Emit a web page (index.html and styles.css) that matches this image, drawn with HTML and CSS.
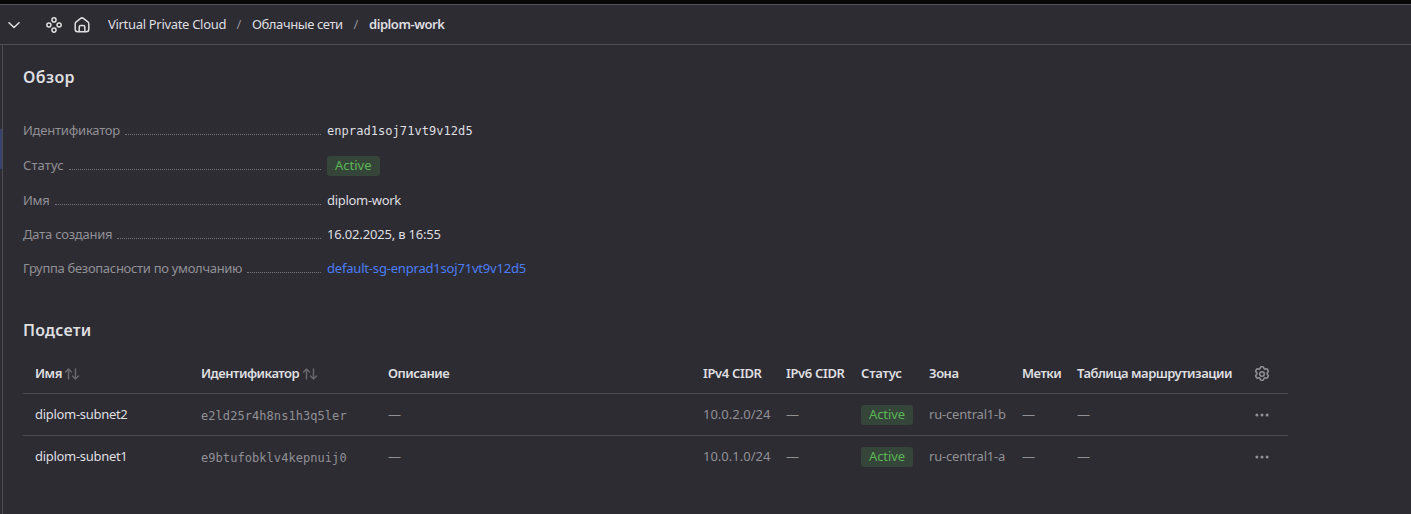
FILE: index.html
```html
<!DOCTYPE html>
<html lang="ru">
<head>
<meta charset="utf-8">
<title>diplom-work</title>
<link rel="stylesheet" href="styles.css">
</head>
<body>
<svg class="sprite" aria-hidden="true">
  <symbol id="sort" viewBox="0 0 16 16"><path d="M4.5 13V3M1.5 6l3-3 3 3M11.5 3v10M8.5 10l3 3 3-3"/></symbol>
  <symbol id="dots" viewBox="0 0 16 16"><circle cx="2.9" cy="8" r="1.5"/><circle cx="8" cy="8" r="1.5"/><circle cx="13.1" cy="8" r="1.5"/></symbol>
</svg>
<div class="page">
  <header class="header">
    <svg class="chevron" viewBox="0 0 16 16"><path d="M3 5.8l5 4.7 5-4.7"/></svg>
    <svg class="services" viewBox="0 0 16 16"><circle cx="8" cy="2.9" r="2.05"/><circle cx="2.9" cy="8" r="2.05"/><circle cx="13.1" cy="8" r="2.05"/><circle cx="8" cy="13.1" r="2.05"/></svg>
    <svg class="home" viewBox="0 0 16 16"><path d="M1.2 6.7a2.5 2.5 0 0 1 1-1.9L6.6 1.4a2.3 2.3 0 0 1 2.8 0l4.4 3.4a2.5 2.5 0 0 1 1 1.9v5.6a2.5 2.5 0 0 1-2.5 2.5H3.7a2.5 2.5 0 0 1-2.5-2.5z"/><path d="M5.2 14.6V10a1.6 1.6 0 0 1 1.6-1.6h2.4A1.6 1.6 0 0 1 10.8 10v4.6"/></svg>
    <nav class="crumbs">
      <span class="crumb crumb-service">Virtual Private Cloud</span><span class="slash">/</span>
      <span class="crumb crumb-list">Облачные сети</span><span class="slash">/</span>
      <span class="crumb crumb-current">diplom-work</span>
    </nav>
  </header>
  <div class="body">
    <aside class="rail"><div class="rail-active"></div></aside>
    <main class="content">
      <h2 class="title">Обзор</h2>
      <dl class="info">
        <div class="row"><dt>Идентификатор</dt><dd class="mono">enprad1soj71vt9v12d5</dd></div>
        <div class="row"><dt class="dt-status">Статус</dt><dd><span class="label">Active</span></dd></div>
        <div class="row"><dt>Имя</dt><dd class="name">diplom-work</dd></div>
        <div class="row"><dt>Дата создания</dt><dd class="date">16.02.2025, в 16:55</dd></div>
        <div class="row"><dt class="dt-group">Группа безопасности по умолчанию</dt><dd><a class="link">default-sg-enprad1soj71vt9v12d5</a></dd></div>
      </dl>
      <h2 class="title title-subnets">Подсети</h2>
      <table class="table">
        <colgroup><col class="c-name"><col class="c-id"><col class="c-desc"><col class="c-v4"><col class="c-v6"><col class="c-status"><col class="c-zone"><col class="c-tags"><col class="c-route"><col class="c-menu"></colgroup>
        <thead>
          <tr>
            <th>Имя<svg class="sort"><use href="#sort"/></svg></th>
            <th>Идентификатор<svg class="sort"><use href="#sort"/></svg></th>
            <th>Описание</th><th class="cidr">IPv4 CIDR</th><th class="cidr">IPv6 CIDR</th><th class="th-status">Статус</th><th>Зона</th><th>Метки</th><th>Таблица маршрутизации</th>
            <th class="menu"><svg class="gear" viewBox="0 0 16 16"><path d="M6.1 2.1Q6.3 .7 7.4 .7h1.2q1.1 0 1.3 1.4l.1.6 1 .6.7-.3q1.2-.45 1.8.5l.6 1q.5 1-.5 1.8l-.5.45v1.5l.5.45q1 .8.5 1.8l-.6 1q-.6.95-1.8.5l-.7-.3-1 .6-.1.6q-.2 1.4-1.3 1.4h-1.2q-1.1 0-1.3-1.4l-.1-.6-1-.6-.7.3q-1.2.45-1.8-.5l-.6-1q-.5-1 .5-1.8l.5-.45v-1.5l-.5-.45q-1-.8-.5-1.8l.6-1q.6-.95 1.8-.5l.7.3 1-.6z"/><circle cx="8" cy="8" r="2.3"/></svg></th>
          </tr>
        </thead>
        <tbody>
          <tr><td class="name">diplom-subnet2</td><td class="mono">e2ld25r4h8ns1h3q5ler</td><td>—</td><td class="ip">10.0.2.0/24</td><td>—</td><td><span class="label">Active</span></td><td class="zone">ru-central1-b</td><td>—</td><td>—</td><td class="menu"><svg class="dots"><use href="#dots"/></svg></td></tr>
          <tr><td class="name">diplom-subnet1</td><td class="mono">e9btufobklv4kepnuij0</td><td>—</td><td class="ip">10.0.1.0/24</td><td>—</td><td><span class="label">Active</span></td><td class="zone">ru-central1-a</td><td>—</td><td>—</td><td class="menu"><svg class="dots"><use href="#dots"/></svg></td></tr>
        </tbody>
      </table>
    </main>
  </div>
</div>
</body>
</html>
```
FILE: styles.css
```css
* { box-sizing: border-box; }
body {
  margin: 0;
  background: #2d2c33;
  color: #dfdfe0;
  font: 13px/18px "Noto Sans", sans-serif;
}
svg { fill: none; stroke: currentColor; stroke-width: 1.5; stroke-linecap: round; stroke-linejoin: round; flex: none; }
.sprite { display: none; }
.page { height: 514px; border-top: 4px solid #060606; display: flex; flex-direction: column; overflow: hidden; }
.header { height: 41px; flex: none; border-top: 1px solid #535257; border-bottom: 1px solid #4e4d53; display: flex; align-items: center; padding-left: 6px; }
.chevron { width: 16px; height: 16px; }
.services { width: 16px; height: 16px; margin-left: 24px; }
.home { width: 16px; height: 16px; margin-left: 12px; }
.crumbs { display: flex; margin-left: 18px; padding-bottom: 2px; }
.slash { color: #919095; width: 26px; text-align: center; }
.crumb { white-space: nowrap; }
.crumb-service { width: 118px; letter-spacing: -0.31px; }
.crumb-list { width: 91px; letter-spacing: -0.4px; }
.crumb-current { font-weight: 600; letter-spacing: -0.45px; }
.body { flex: 1; display: flex; }
.rail { width: 3px; border-right: 1px solid #4e4d53; padding-top: 84px; }
.rail-active { height: 40px; background: #35426c; }
.content { padding: 22px 0 0 20px; }
.title { margin: 0; font-size: 16px; line-height: 20px; font-weight: 600; letter-spacing: 0.4px; }
.title-subnets { letter-spacing: 0.2px; }
.info { margin: 34px 0 43px; display: flex; flex-direction: column; gap: 16px; }
.row { display: flex; align-items: center; height: 18px; }
.row:nth-child(2) { height: 20px; }
.row dt { width: 304px; padding-right: 6px; display: flex; align-items: baseline; gap: 5px; color: #919095; letter-spacing: -0.22px; white-space: nowrap; }
.row .dt-status { letter-spacing: 0.1px; }
.row .dt-group { letter-spacing: -0.31px; }
.row dt::after { content: ""; flex: 1; border-bottom: 1px dotted #77767b; }
.row dd { margin: 0; }
.row .mono { padding-top: 2px; }
.row .label { margin-top: 1px; line-height: 19px; }
.mono { font-family: "DejaVu Sans Mono", monospace; font-size: 12px; letter-spacing: 0.06px; }
.name { letter-spacing: -0.3px; }
.date { letter-spacing: -0.18px; }
.label { display: inline-block; vertical-align: top; height: 20px; line-height: 18px; padding: 0 8px; border-radius: 3px; background: #364539; color: #5bb557; }
.table .label { letter-spacing: -0.1px; }
.link { color: #4b7df8; letter-spacing: -0.19px; }
.table { margin-top: 12px; width: 1265px; table-layout: fixed; border-collapse: collapse; color: #919095; }
.table th, .table td { padding: 0 0 0 8px; text-align: left; white-space: nowrap; vertical-align: middle; }
.table th:first-child, .table td:first-child { padding-left: 12px; }
.table th { height: 41px; padding-top: 2px; color: #dfdfe0; font-weight: 600; letter-spacing: -0.5px; }
.table .cidr { letter-spacing: -0.35px; }
.table .th-status { letter-spacing: -0.2px; }
.table td { height: 42px; }
.table td.mono { padding-top: 3px; }
.table .label { position: relative; top: 1px; }
.table tbody tr { border-top: 1px solid #4b4a50; }
.table .name { color: #dfdfe0; }
.zone { letter-spacing: -0.18px; }
.sort { width: 16px; height: 16px; margin-left: 3px; vertical-align: -4px; color: #67666b; }
.table th:first-child .sort { margin-left: 2px; }
.table .menu { padding-left: 7px; padding-top: 2px; }
.table th.menu { padding-top: 4px; }
.gear, .dots { width: 16px; height: 16px; display: block; color: #919095; }
.dots { fill: currentColor; stroke: none; }
.c-name { width: 170px; }
.c-id { width: 187px; }
.c-desc { width: 315px; }
.c-v4 { width: 83px; }
.c-v6 { width: 75px; }
.c-status { width: 68px; }
.c-zone { width: 93px; }
.c-tags { width: 55px; }
.c-route { width: 178px; }
.c-menu { width: 41px; }
```
